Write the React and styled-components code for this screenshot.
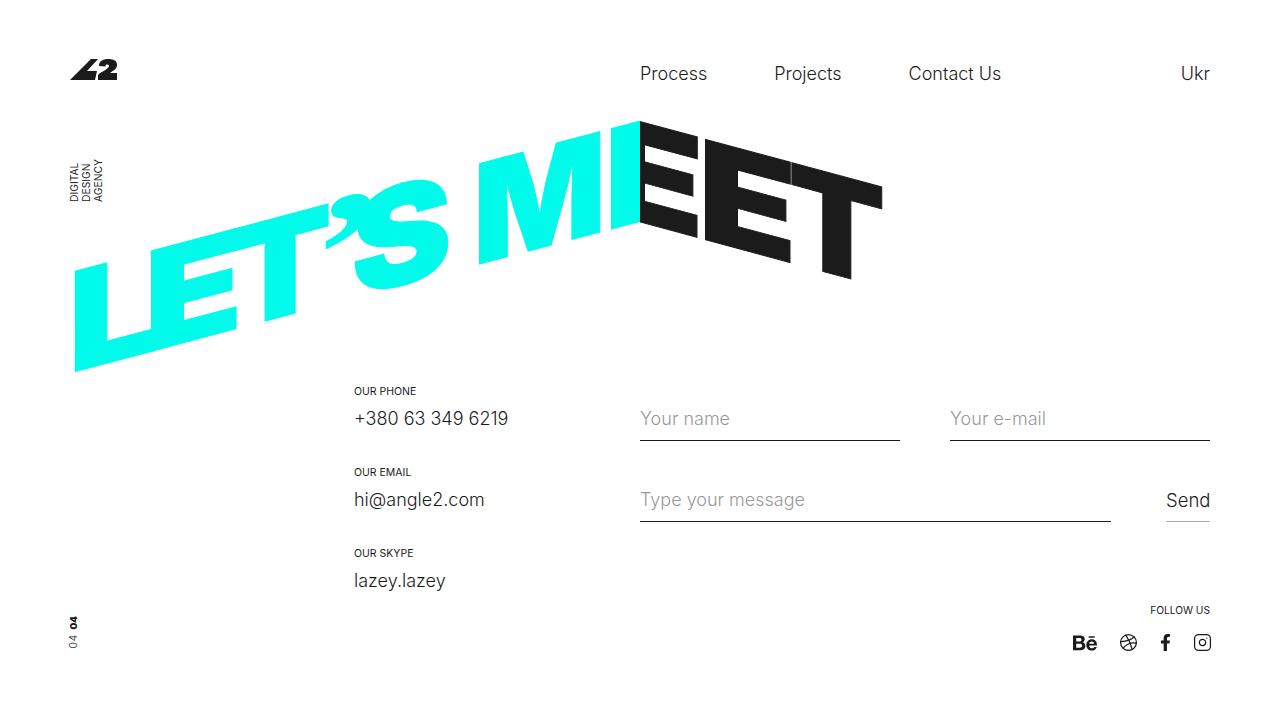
import React from 'react';
import styled, { createGlobalStyle } from 'styled-components';
import { FaBehance, FaFacebookF } from 'react-icons/fa';
import { Dribbble, Instagram } from 'lucide-react';

const GlobalStyle = createGlobalStyle`
    html, body {
        margin: 0;
        padding: 0;
        background: #fff;
    }
    body {
        font-family: Inter, "Open Sans", sans-serif;
        font-weight: 300;
        color: #1b1b1b;
    }
`

const Page = styled.div`
    box-sizing: border-box;
    width: 1280px;
    height: 720px;
    padding: 59px 70px 0;
    display: flex;
    flex-direction: column;
    overflow: hidden;
`

const Header = styled.header`
    display: flex;
    height: 51px;
    font-size: 18px;
`

const LogoBox = styled.div`
    width: 570px;
    flex: none;
`

const Nav = styled.nav`
    display: flex;
    gap: 67px;
`

const NavLink = styled.a`
    line-height: 22px;
    padding-top: 4px;
`

const Lang = styled(NavLink)`
    margin-left: auto;
`

const Hero = styled.section`
    display: grid;
    height: 275px;
    grid-template-columns: 570px 570px;
`

const Tagline = styled.div`
    grid-area: 1 / 1;
    z-index: 1;
    align-self: start;
    justify-self: start;
    margin-top: 49px;
    margin-left: -2px;
    writing-mode: vertical-rl;
    transform: rotate(180deg);
    font-size: 10.3px;
    line-height: 12px;
    font-weight: 400;
    text-transform: uppercase;
`

const Fold = styled.div`
    height: 275px;
    grid-row: 1;
    grid-column: ${(p) => p.$col};
    clip-path: ${(p) => p.$clip};
`

const Word = styled.div`
    display: flex;
    align-items: baseline;
    width: max-content;
    font-size: 138px;
    line-height: 1;
    font-weight: 900;
    white-space: nowrap;
    color: ${(p) => p.$color};
    -webkit-text-stroke: 1px ${(p) => p.$color};
    margin: ${(p) => p.$margin};
    transform-origin: ${(p) => p.$origin};
    transform: skewY(${(p) => p.$skew}deg);
`

const Letter = styled.span`
    display: inline-block;
    margin-left: ${(p) => p.$gap || 0}px;
    font-size: ${(p) => p.$size || 138}px;
    font-family: ${(p) => p.$font || 'inherit'};
    transform-origin: left center;
    transform: scaleX(${(p) => p.$sx || 1});
`

const Body = styled.main`
    display: grid;
    grid-template-columns: 284px 286px 1fr;
`

const Contacts = styled.div`
    grid-column: 2;
    display: flex;
    flex-direction: column;
    gap: 29px;
`

const Contact = styled.div`
    display: flex;
    flex-direction: column;
    gap: 3px;
`

const Label = styled.span`
    font-size: 10.5px;
    line-height: 13px;
    font-weight: 400;
    text-transform: uppercase;
`

const Value = styled.span`
    font-size: 18px;
    line-height: 36px;
`

const Form = styled.form`
    grid-column: 3;
    display: grid;
    grid-template-columns: 260px 50px 161px 55px 44px 0;
    grid-auto-rows: 56px;
    row-gap: 25px;
`

const Field = styled.input`
    box-sizing: border-box;
    grid-column: ${(p) => p.$col};
    width: 100%;
    height: 56px;
    padding: 12px 0 0;
    margin: 0;
    border: 0;
    border-bottom: 1px solid #1b1b1b;
    outline: none;
    background: none;
    font-family: inherit;
    font-weight: 300;
    font-size: 18px;
    color: #1b1b1b;
    &::placeholder {
        color: #999;
        opacity: 1;
    }
`

const Send = styled.button`
    grid-column: 5;
    padding: 12px 0 0;
    height: 56px;
    border: 0;
    border-bottom: 1px solid #aaa;
    background: none;
    font-family: inherit;
    font-weight: 300;
    font-size: 18.500px;
    color: #1b1b1b;
`

const Footer = styled.footer`
    display: flex;
    justify-content: space-between;
    align-items: flex-end;
    margin-top: 5px;
`

const PageCount = styled.div`
    writing-mode: vertical-rl;
    transform: rotate(180deg);
    display: flex;
    gap: 5px;
    margin: 0 0 2px -2px;
    font-size: 10.5px;
    line-height: 12px;
    letter-spacing: 0.5px;
`

const PageNow = styled.b`
    font-size: 9.500px;
    font-weight: 900;
    letter-spacing: 0;
`

const Follow = styled.div`
    display: flex;
    flex-direction: column;
    align-items: flex-end;
    gap: 17px;
`

const FollowLabel = styled(Label)`
    font-size: 10.2px;
`

const Socials = styled.div`
    display: flex;
    align-items: center;
    gap: 19px;
    height: 17px;
    margin-right: -1.500px;
`

const BehanceIcon = styled(FaBehance)`
    margin-right: 3px;
`

const Logo = () => (
    <svg width="48" height="21" viewBox="0 0 48 21">
        <path fill="#1b1b1b" d="M0 21 21 0H28L17 12H27L25 21Z" />
        <path fill="#1b1b1b" d="M29 7C29 2 33 0 38 0C44 0 47 2 47 6C47 10 44 11 40 14H47V21H28V16C32 12 39 10 39 7C39 6 38 5.500 37 5.500C36 5.500 35.500 6 35.500 7.500Z" />
    </svg>
)

const contacts = [
    { label: 'Our phone', value: '+380 63 349 6219' },
    { label: 'Our email', value: 'hi@angle2.com' },
    { label: 'Our skype', value: 'lazey.lazey' },
]

const App = () => {
    return (
        <Page>
            <GlobalStyle />
            <Header>
                <LogoBox><Logo /></LogoBox>
                <Nav>
                    <NavLink>Process</NavLink>
                    <NavLink>Projects</NavLink>
                    <NavLink>Contact Us</NavLink>
                </Nav>
                <Lang>Ukr</Lang>
            </Header>

            <Hero>
                <Tagline>Digital<br />Design<br />Agency</Tagline>
                <Fold $col={1} $clip="inset(-40px 0 -40px -40px)">
                    <Word $color="#00fbeb" $margin="134px 0 0 -2px" $origin="2px 130px" $skew={-14.9}>
                        <Letter $sx={1.15}>L</Letter>
                        <Letter $gap={-2} $sx={1.17}>E</Letter>
                        <Letter $gap={-1} $sx={1.1}>T</Letter>
                        <Letter $gap={-9} $font="'Liberation Serif'" $size={155} $sx={1.4}>’</Letter>
                        <Letter $gap={-14} $sx={1.1}>S</Letter>
                        <Letter $gap={30} $sx={1.01}>M</Letter>
                        <Letter $gap={-1} $sx={1.17}>E</Letter>
                    </Word>
                </Fold>
                <Fold $col={2} $clip="inset(-40px -40px -40px 0)">
                    <Word $color="#1b1b1b" $margin="-7px 0 0 -35px" $origin="35px 120px" $skew={15.1}>
                        <Letter $sx={1.17}>E</Letter>
                        <Letter $gap={8} $sx={1.17}>E</Letter>
                        <Letter $gap={6} $sx={1.03}>T</Letter>
                    </Word>
                </Fold>
            </Hero>

            <Body>
                <Contacts>
                    {contacts.map((item) => (
                        <Contact key={item.label}>
                            <Label>{item.label}</Label>
                            <Value>{item.value}</Value>
                        </Contact>
                    ))}
                </Contacts>
                <Form>
                    <Field $col="1" placeholder="Your name" />
                    <Field $col="3 / 6" placeholder="Your e-mail" />
                    <Field $col="1 / 4" placeholder="Type your message" />
                    <Send type="button">Send</Send>
                </Form>
            </Body>

            <Footer>
                <PageCount>
                    <span>04</span>
                    <PageNow>04</PageNow>
                </PageCount>
                <Follow>
                    <FollowLabel>Follow us</FollowLabel>
                    <Socials>
                        <BehanceIcon size={24} />
                        <Dribbble size={19} strokeWidth={1.6} />
                        <FaFacebookF size={17} />
                        <Instagram size={19} strokeWidth={1.6} />
                    </Socials>
                </Follow>
            </Footer>
        </Page>
    );
}

export default App;
